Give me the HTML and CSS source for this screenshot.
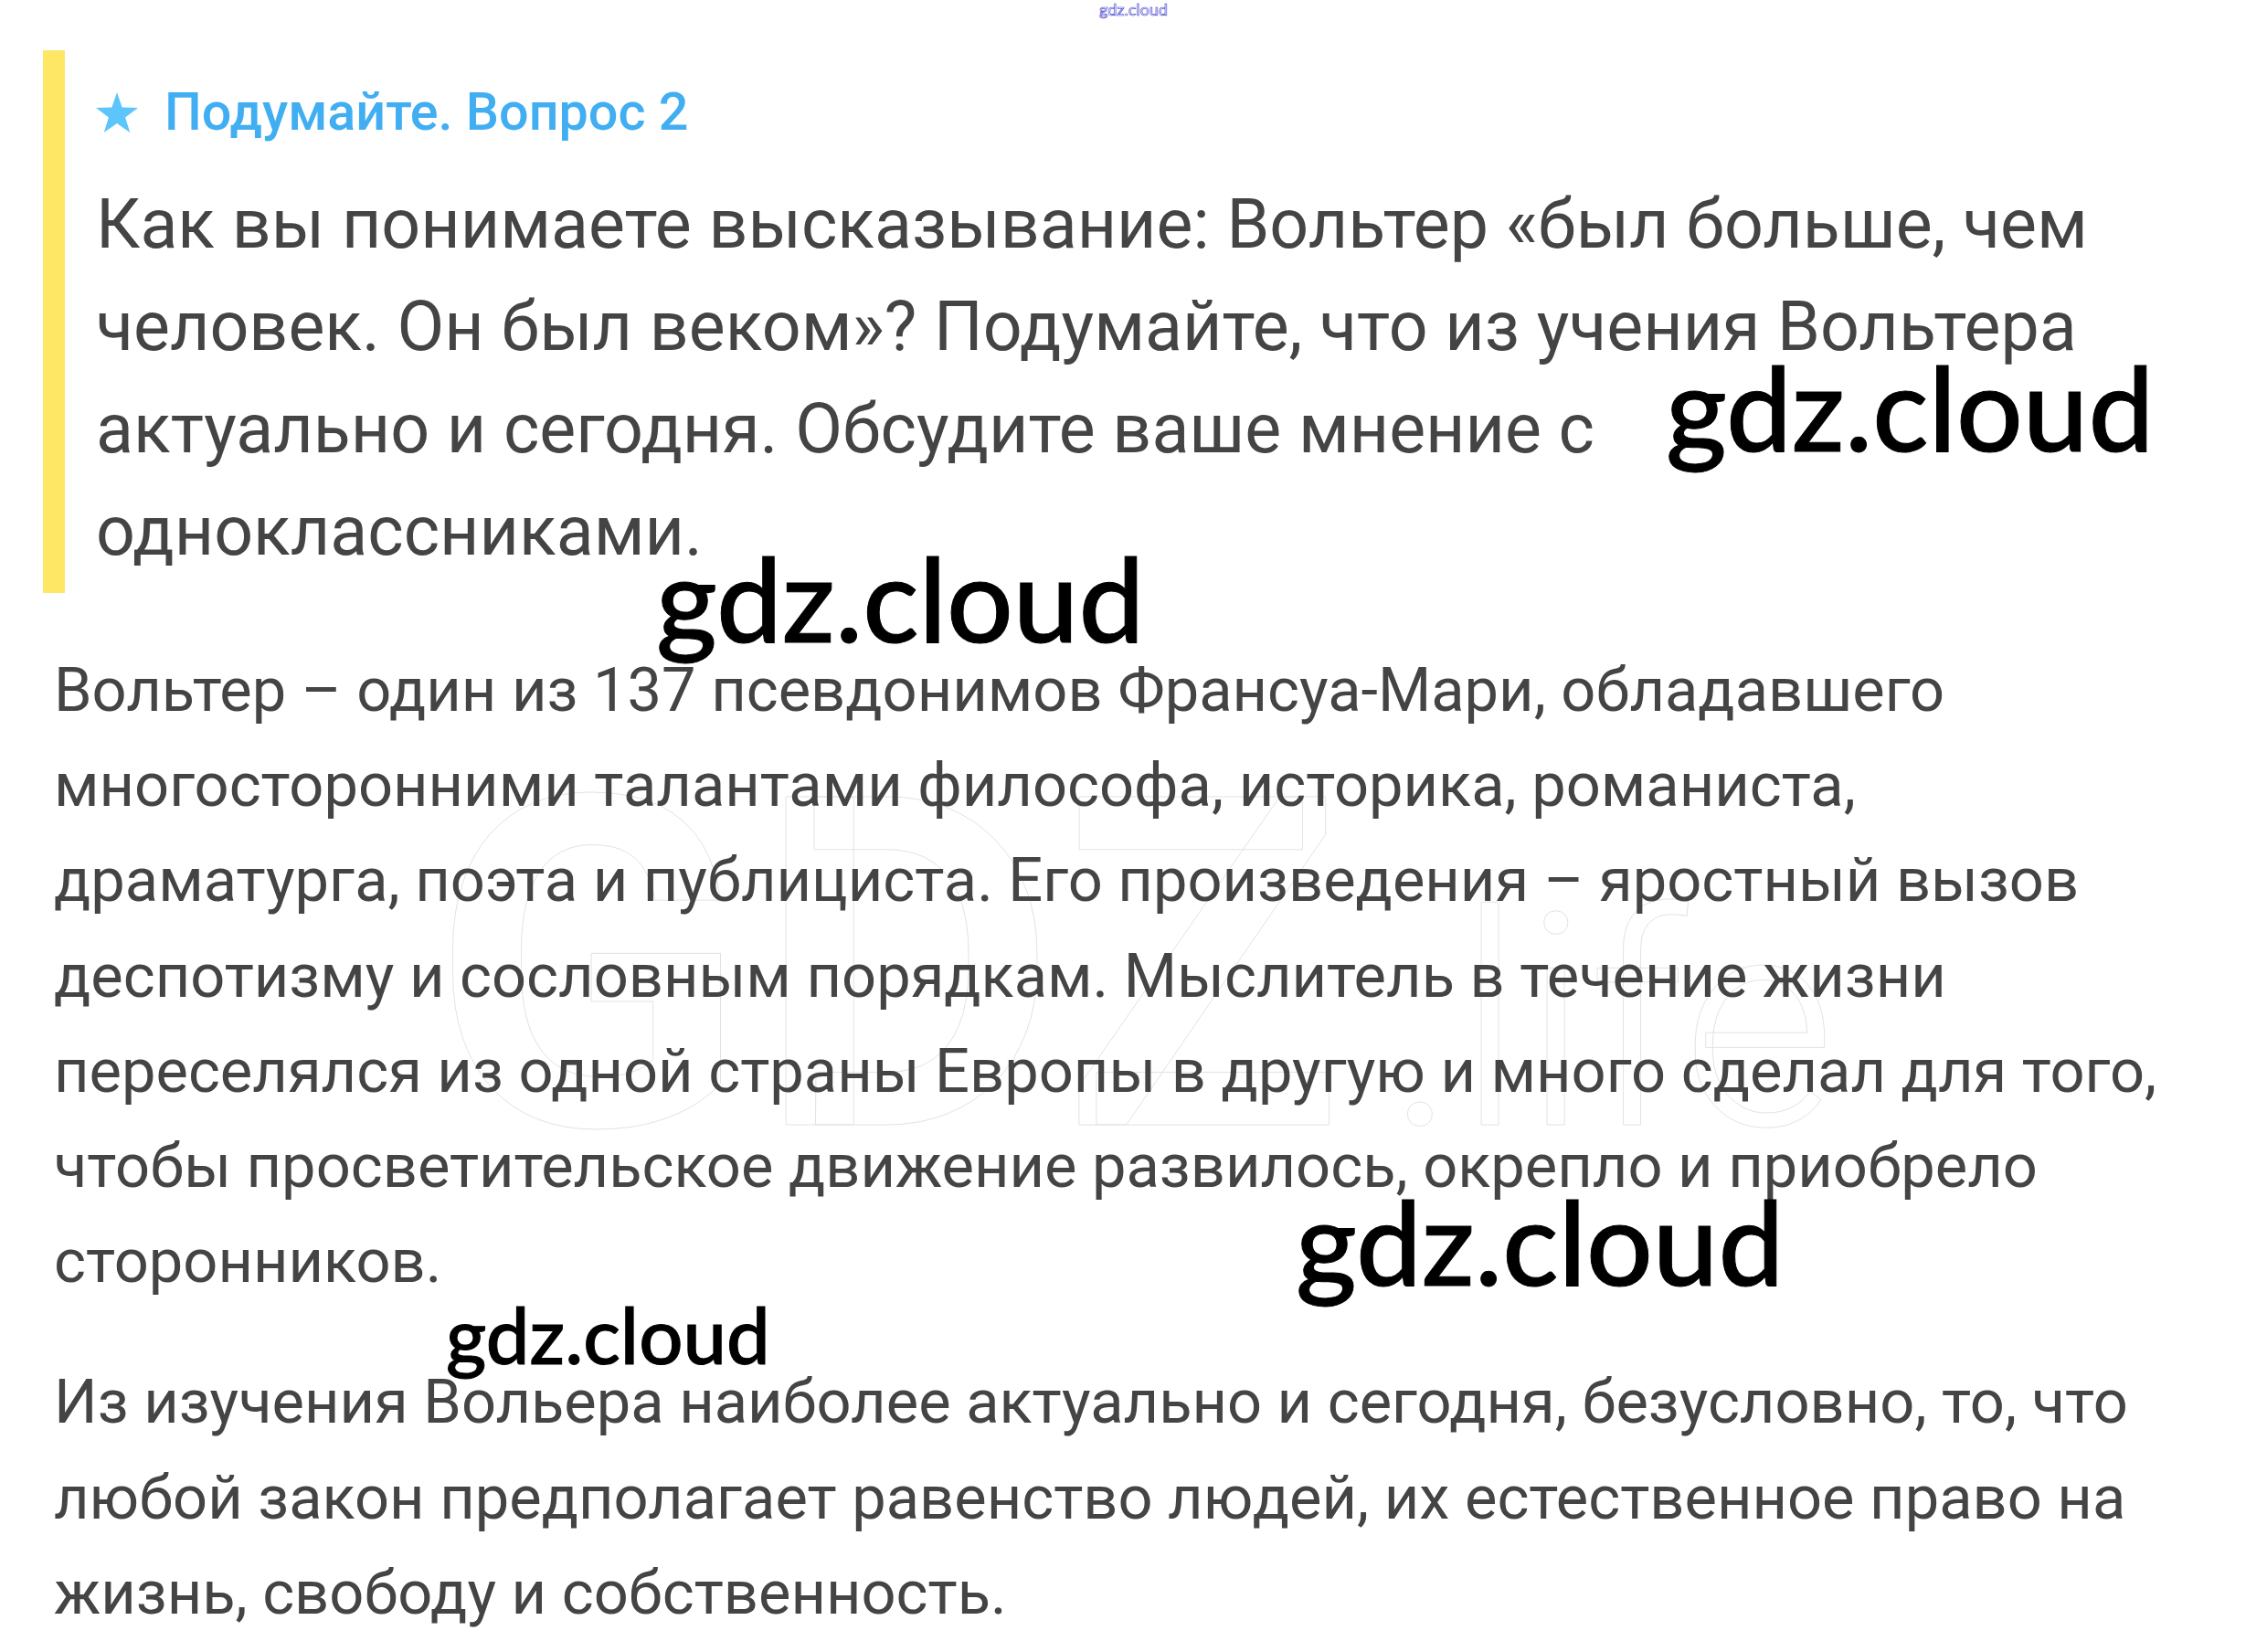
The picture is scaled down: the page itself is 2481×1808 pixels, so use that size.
FILE: index.html
```html
<!DOCTYPE html>
<html lang="ru">
<head>
<meta charset="utf-8">
<title>Подумайте. Вопрос 2</title>
<link rel="stylesheet" href="styles.css">
</head>
<body>
<main class="page">
  <section class="question">
    <h2 class="question-title">
      <svg class="star" viewBox="0 0 46 44" aria-hidden="true"><polygon points="23,0 28.6,16.6 46,16.9 32.1,27.4 37.2,44 23,34 8.8,44 13.9,27.4 0,16.9 17.4,16.6"/></svg>
      <span>Подумайте. Вопрос 2</span>
    </h2>
    <p class="question-text">Как вы понимаете высказывание: Вольтер «был больше, чем<br>человек. Он был веком»? Подумайте, что из учения Вольтера<br>актуально и сегодня. Обсудите ваше мнение с<br>одноклассниками.</p>
  </section>
  <p class="answer">Вольтер – один из 137 псевдонимов Франсуа-Мари, обладавшего<br>многосторонними талантами философа, историка, романиста,<br>драматурга, поэта и публициста. Его произведения – яростный вызов<br>деспотизму и сословным порядкам. Мыслитель в течение жизни<br>переселялся из одной страны Европы в другую и много сделал для того,<br>чтобы просветительское движение развилось, окрепло и приобрело<br>сторонников.</p>
  <p class="answer">Из изучения Вольера наиболее актуально и сегодня, безусловно, то, что<br>любой закон предполагает равенство людей, их естественное право на<br>жизнь, свободу и собственность.</p>
</main>
<div class="mark-top">gdz.cloud</div>
<div class="mark-bg"><span class="bg-bold">GDZ</span><span class="bg-thin">.life</span></div>
<div class="mark mark-a">gdz.cloud</div>
<div class="mark mark-b">gdz.cloud</div>
<div class="mark mark-c">gdz.cloud</div>
<div class="mark mark-d">gdz.cloud</div>
</body>
</html>
```
FILE: styles.css
```css
html, body { margin: 0; padding: 0; }
html { background: #fff; }
body { width: 2481px; height: 1808px; overflow: hidden; position: relative; font-family: Roboto, "Liberation Sans", sans-serif; color: #444; }
.page { padding: 55px 0 0 59px; position: relative; z-index: 1; }
.question { margin-left: -12px; border-left: 24px solid #ffe766; padding: 35px 0 0 34px; height: 559px; }
.question-title { margin: 0; display: flex; align-items: center; gap: 29px; font-size: 57.5px; line-height: 66px; font-weight: 500; color: #42aef2; }
.star { width: 46px; height: 44px; fill: #5cc5fb; }
.question-text { margin: 33px 0 0; font-size: 75.3px; line-height: 112px; }
.answer { margin: 0; font-size: 66.8px; line-height: 104.2px; }
.question + .answer { margin-top: 54px; }
.answer + .answer { margin-top: 50px; }
.mark, .mark-top, .mark-bg { position: absolute; white-space: nowrap; font-family: Lato, sans-serif; line-height: 1; z-index: 2; }
.mark { color: #000; font-size: 128px; font-weight: 500; -webkit-text-stroke: 1px #000; }
.mark-a { left: 1823px; top: 381px; }
.mark-b { left: 718px; top: 590px; }
.mark-c { left: 1418px; top: 1294px; }
.mark-d { left: 488px; top: 1418px; font-size: 85px; }
.mark-top { left: 1203px; top: 1px; font-size: 18px; color: #fff; -webkit-text-stroke: 0.6px #3030d0; }
.mark-bg { left: 472px; top: 806px; font-size: 505px; font-family: Roboto, sans-serif; color: transparent; -webkit-text-stroke: 1px #e2e2e2; z-index: 0; }
.bg-bold { font-weight: 700; letter-spacing: 12px; }
.bg-thin { font-weight: 300; font-size: 325px; letter-spacing: -1px; margin-left: 36px; }
```
